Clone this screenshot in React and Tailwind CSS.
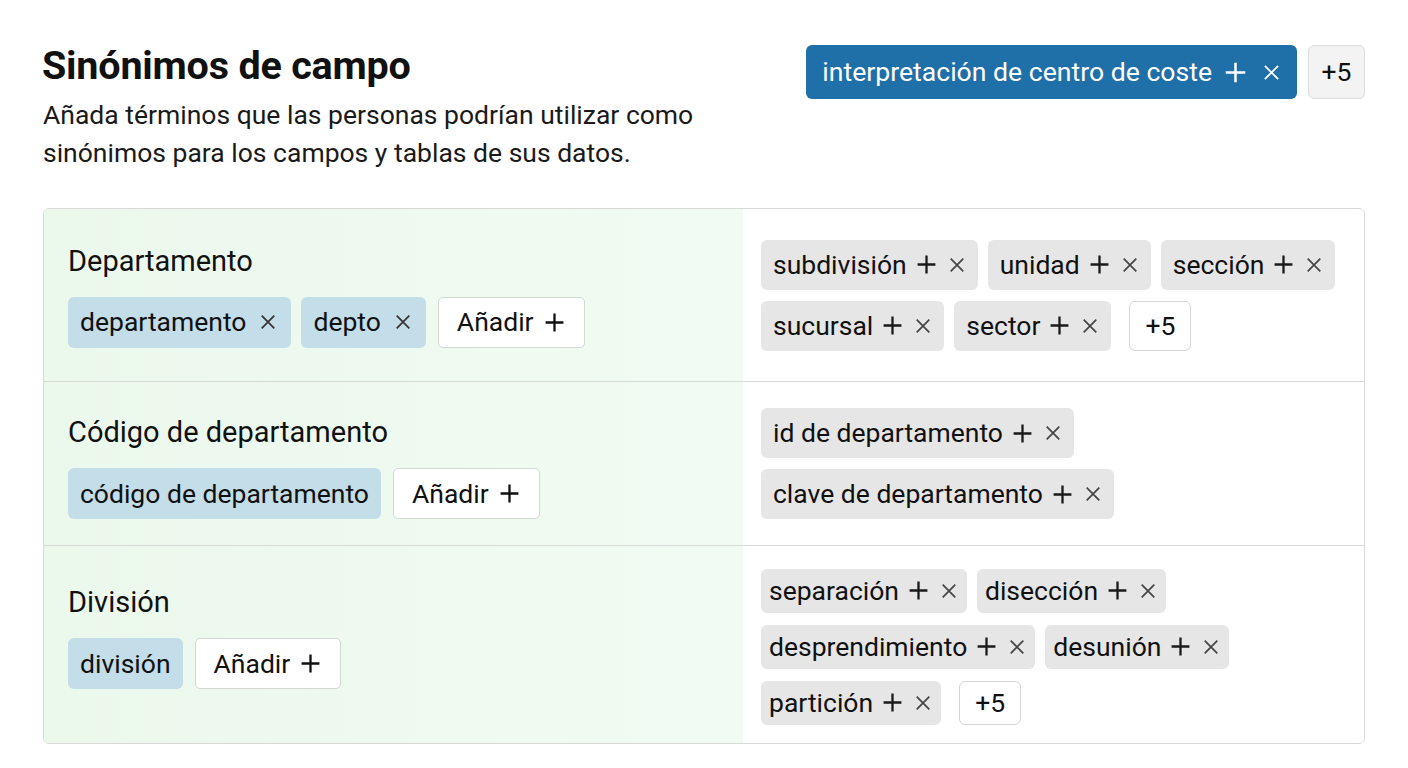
import React from 'react'

const font = { fontFamily: 'Roboto, "Noto Sans", "Liberation Sans", sans-serif' }

function PlusIcon({ className = 'w-[20px] h-[20px]' }) {
  return (
    <svg viewBox="0 0 20 20" className={className} fill="none" stroke="currentColor" strokeWidth="2.2" strokeLinecap="butt">
      <path d="M10 1.5v17M1.5 10h17" />
    </svg>
  )
}

function XIcon({ className = 'w-[17px] h-[17px]' }) {
  return (
    <svg viewBox="0 0 20 20" className={className} fill="none" stroke="currentColor" strokeWidth="1.9">
      <path d="M3 3l14 14M17 3L3 17" />
    </svg>
  )
}

function BlueChip({ label, removable = true }) {
  return (
    <span
      className={
        'inline-flex items-center h-[51px] pl-[12px] gap-[13px] rounded-[6px] bg-[#c3dde9] text-[26.5px] text-[#111] ' +
        (removable ? 'pr-[14px]' : 'pr-[12px]')
      }
    >
      {label}
      {removable && <XIcon className="w-[18px] h-[18px] text-[#333]" />}
    </span>
  )
}

function AddButton() {
  return (
    <span className="inline-flex items-center h-[51px] pl-[18px] pr-[19px] gap-[10px] rounded-[5px] bg-white border border-[#d4d8d4] text-[26.5px] text-[#111]">
      Añadir
      <PlusIcon className="w-[21px] h-[21px] text-[#111]" />
    </span>
  )
}

function GrayChip({ label, compact }) {
  return (
    <span
      className={
        compact
          ? 'inline-flex items-center h-[44px] pl-[8px] pr-[9px] rounded-[6px] bg-[#e6e6e6] text-[26.5px] text-[#111]'
          : 'inline-flex items-center h-[50px] pl-[12px] pr-[12px] rounded-[6px] bg-[#e6e6e6] text-[26.5px] text-[#111]'
      }
    >
      {label}
      <PlusIcon className="ml-[9px] w-[21px] h-[21px] text-[#1a1a1a]" />
      <XIcon className="ml-[11px] w-[18px] h-[18px] text-[#444]" />
    </span>
  )
}

function MoreBox({ compact }) {
  return (
    <span
      className={
        'inline-flex items-center justify-center w-[62px] ml-[8px] rounded-[6px] bg-white border border-[#d6d6d6] text-[26.5px] text-[#111] ' +
        (compact ? 'h-[44px]' : 'h-[50px]')
      }
    >
      +5
    </span>
  )
}

const rows = [
  {
    title: 'Departamento',
    chips: [{ label: 'departamento' }, { label: 'depto' }],
    suggestions: ['subdivisión', 'unidad', 'sección', 'sucursal', 'sector'],
    more: true,
    height: 'h-[172px]',
    leftPad: 'pt-[2px]',
  },
  {
    title: 'Código de departamento',
    chips: [{ label: 'código de departamento', removable: false }],
    suggestions: ['id de departamento', 'clave de departamento'],
    stacked: true,
    height: 'h-[164px]',
    leftPad: 'pt-[8px]',
  },
  {
    title: 'División',
    chips: [{ label: 'división', removable: false }],
    suggestions: ['separación', 'disección', 'desprendimiento', 'desunión', 'partición'],
    more: true,
    compact: true,
    height: 'h-[198px]',
    leftPad: 'pb-[14px]',
  },
]

export default function App() {
  return (
    <div className="min-h-[768px] w-[1408px] bg-white px-[43px] pt-[44px]" style={font}>
      <div className="flex items-start justify-between">
        <div>
          <h1 className="text-[39.5px] leading-[44px] font-bold text-[#111] tracking-[-0.2px] -ml-[1px]">Sinónimos de campo</h1>
          <p className="mt-[8px] w-[700px] text-[26.5px] leading-[38px] text-[#1a1a1a]">
            Añada términos que las personas podrían utilizar como sinónimos para los campos y tablas de sus datos.
          </p>
        </div>
        <div className="flex items-center gap-[11px] pt-[1px]">
          <span className="inline-flex items-center h-[54px] pl-[16px] pr-[16px] rounded-[6px] bg-[#1f6fa8] text-[26.6px] text-white">
            interpretación de centro de coste
            <PlusIcon className="ml-[12px] w-[23px] h-[23px] text-white" />
            <XIcon className="ml-[15px] w-[19px] h-[19px] text-white" />
          </span>
          <span className="inline-flex items-center justify-center h-[54px] w-[57px] rounded-[6px] bg-[#f3f3f3] border border-[#dcdcdc] text-[26.5px] text-[#111]">
            +5
          </span>
        </div>
      </div>

      <div className="mt-[36px] border border-[#d6d9d6] rounded-[6px] overflow-hidden">
        {rows.map((row, i) => (
          <div
            key={row.title}
            className={'grid grid-cols-[699px_1fr] ' + row.height + (i > 0 ? ' border-t border-[#d6d9d6]' : '')}
          >
            <div className={'flex flex-col justify-center pl-[24px] bg-gradient-to-r from-[#ebf8ec] to-[#f1fbf3] ' + row.leftPad}>
              <div className="text-[29px] leading-[32px] text-[#111]">{row.title}</div>
              <div className="mt-[20px] flex items-center gap-[10px]">
                {row.chips.map((c) => (
                  <BlueChip key={c.label} label={c.label} removable={c.removable !== false} />
                ))}
                <span className="ml-[2px]"><AddButton /></span>
              </div>
            </div>
            <div className={'flex items-center pl-[18px] pr-[20px] bg-white ' + (row.compact ? 'pt-[4px]' : '')}>
              {row.stacked ? (
                <div className="flex flex-col items-start gap-[11px]">
                  {row.suggestions.map((s) => (
                    <GrayChip key={s} label={s} />
                  ))}
                </div>
              ) : (
                <div className={'flex flex-wrap items-center gap-x-[10px] ' + (row.compact ? 'gap-y-[12px] w-[480px]' : 'gap-y-[11px]')}>
                  {row.suggestions.map((s) => (
                    <GrayChip key={s} label={s} compact={row.compact} />
                  ))}
                  {row.more && <MoreBox compact={row.compact} />}
                </div>
              )}
            </div>
          </div>
        ))}
      </div>
    </div>
  )
}
